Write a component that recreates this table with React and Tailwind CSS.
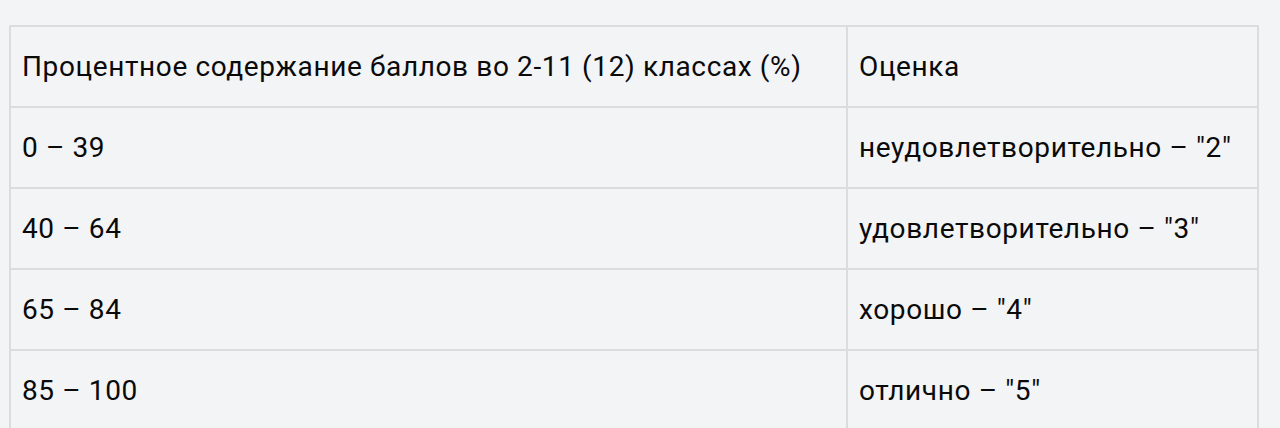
export default function App() {
  const rows = [
    ["0 – 39", "неудовлетворительно – \"2\""],
    ["40 – 64", "удовлетворительно – \"3\""],
    ["65 – 84", "хорошо – \"4\""],
    ["85 – 100", "отлично – \"5\""],
  ];
  return (
    <div className="w-[1280px] h-[428px] overflow-hidden bg-[#f3f4f6] pt-[25px] pl-[9px]" style={{ fontFamily: "Roboto, 'Noto Sans', sans-serif" }}>
      <table className="w-[1250px] border-collapse text-[28px] text-[#0a0a0a] tracking-[0.62px]">
        <tbody>
          <tr className="h-[81px]">
            <td className="w-[837px] border-2 border-[#dcdcdc] pl-[11px] align-middle">Процентное содержание баллов во 2-11 (12) классах (%)</td>
            <td className="border-2 border-[#dcdcdc] pl-[11px] align-middle">Оценка</td>
          </tr>
          {rows.map(([a, b]) => (
            <tr key={a} className="h-[81px]">
              <td className="border-2 border-[#dcdcdc] pl-[11px] align-middle">{a}</td>
              <td className="border-2 border-[#dcdcdc] pl-[11px] align-middle">{b}</td>
            </tr>
          ))}
        </tbody>
      </table>
    </div>
  );
}
